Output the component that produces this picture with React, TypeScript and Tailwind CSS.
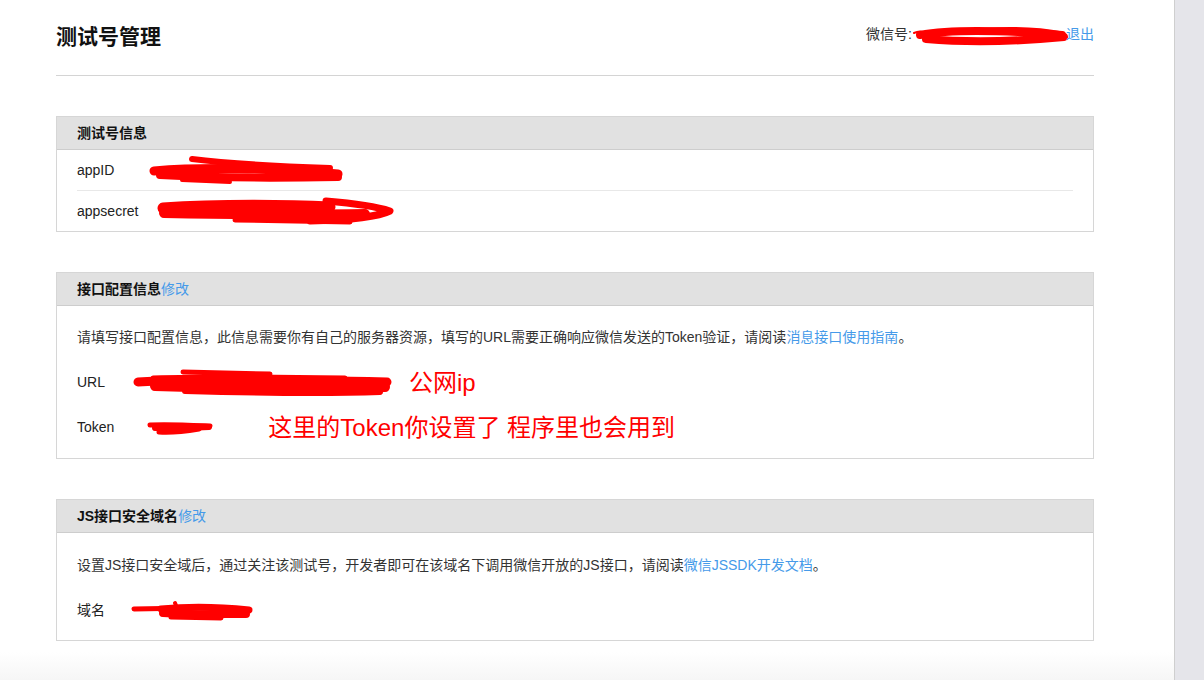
import React from "react";

const FONT = { fontFamily: '"Liberation Sans", "Noto Sans CJK SC", sans-serif' };

function Scribble({ w, h, paths }: { w: number; h: number; paths: [string, number][] }) {
  return (
    <svg width={w} height={h} viewBox={`0 0 ${w} ${h}`} className="block shrink-0 overflow-visible">
      {paths.map(([d, sw], i) => (
        <path key={i} d={d} stroke="#ff0000" strokeWidth={sw} strokeLinecap="round" strokeLinejoin="round" fill="none" />
      ))}
    </svg>
  );
}

function PanelHeader({ title, link }: { title: string; link?: string }) {
  return (
    <div className="h-[33px] bg-[#e1e1e1] border-b border-[#cdcdcd] flex items-center pl-[20px] text-[14px] font-bold text-[#111]">
      {title}
      {link && <span className="text-[#459ae9] font-normal">{link}</span>}
    </div>
  );
}

export default function App() {
  return (
    <div className="flex w-[1204px] h-[680px] overflow-hidden bg-white" style={FONT}>
      <div className="flex-1 h-full bg-[linear-gradient(to_bottom,#ffffff_652px,#f6f6f6_680px)]">
        <div className="ml-[56px] w-[1038px]">
          <div className="h-[76px] border-b border-[#d4d4d4] flex justify-between items-start">
            <h1 className="mt-[22px] text-[21px] leading-[30px] font-bold text-[#111]">测试号管理</h1>
            <div className="mt-[23px] flex items-center text-[14px] leading-[20px] text-[#333]">
              <span>微信号:</span>
              <Scribble
                w={154}
                h={22}
                paths={[
                  ["M8 12 C 40 6, 100 8, 150 12", 8],
                  ["M14 16 C 60 20, 110 18, 152 14", 8],
                  ["M50 9 C 90 5, 120 5, 150 11", 5],
                  ["M2 10 C 6 8, 10 8, 14 10", 2],
                ]}
              />
              <span className="text-[#459ae9]">退出</span>
            </div>
          </div>

          <div className="mt-[40px] border border-[#d6d6d6] text-[14px] text-[#222]">
            <PanelHeader title="测试号信息" />
            <div className="px-[20px]">
              <div className="h-[41px] flex items-center border-b border-[#e8e8e8]">
                <span>appID</span>
                <div className="ml-[38px]">
                  <Scribble
                    w={190}
                    h={28}
                    paths={[
                      ["M2 15 C 50 11, 120 12, 186 18", 9],
                      ["M40 3 C 80 8, 120 10, 178 12", 6],
                      ["M8 19 C 60 22, 130 22, 186 21", 8],
                      ["M30 24 L 78 26", 4],
                      ["M140 13 L 184 16", 4],
                    ]}
                  />
                </div>
              </div>
              <div className="h-[40px] flex items-center">
                <span>appsecret</span>
                <div className="ml-[22px]">
                  <Scribble
                    w={232}
                    h={26}
                    paths={[
                      ["M3 10 C 60 6, 130 7, 170 9", 11],
                      ["M4 15 C 60 16, 140 17, 205 16", 10],
                      ["M166 3 C 190 5, 215 8, 230 13 C 220 18, 190 22, 150 23", 7],
                      ["M75 22 L 190 24", 5],
                    ]}
                  />
                </div>
              </div>
            </div>
          </div>

          <div className="mt-[40px] border border-[#d6d6d6] text-[14px] text-[#222]">
            <PanelHeader title="接口配置信息" link="修改" />
            <div className="px-[20px] pt-[20px] pb-[8px]">
              <p className="leading-[22px] text-[#333]">
                请填写接口配置信息，此信息需要你有自己的服务器资源，填写的URL需要正确响应微信发送的Token验证，请阅读
                <span className="text-[#459ae9]">消息接口使用指南</span>。
              </p>
              <div className="mt-[12px] h-[45px] flex items-center">
                <span>URL</span>
                <div className="ml-[30px]">
                  <Scribble
                    w={256}
                    h={28}
                    paths={[
                      ["M48 3 L 135 5", 5],
                      ["M3 13 C 60 10, 160 11, 252 13", 9],
                      ["M20 17 C 90 19, 180 20, 250 18", 10],
                      ["M50 22 C 120 24, 190 25, 245 23", 6],
                      ["M18 9 C 80 7, 150 8, 210 9", 5],
                    ]}
                  />
                </div>
                <span className="ml-[18px] text-[24px] leading-[30px] text-[#ff0000]">公网ip</span>
              </div>
              <div className="h-[45px] flex items-center">
                <span>Token</span>
                <div className="ml-[33px]">
                  <Scribble
                    w={66}
                    h={18}
                    paths={[
                      ["M3 6 C 20 5, 40 6, 63 7", 5],
                      ["M8 9 C 25 10, 45 9, 62 8", 6],
                      ["M12 13 C 25 14, 40 12, 52 10", 5],
                    ]}
                  />
                </div>
                <span className="ml-[55px] text-[24px] leading-[30px] text-[#ff0000]">这里的Token你设置了 程序里也会用到</span>
              </div>
            </div>
          </div>

          <div className="mt-[40px] border border-[#d6d6d6] text-[14px] text-[#222]">
            <PanelHeader title="JS接口安全域名" link="修改" />
            <div className="px-[20px] pt-[21px] pb-[7px]">
              <p className="leading-[22px] text-[#333]">
                设置JS接口安全域后，通过关注该测试号，开发者即可在该域名下调用微信开放的JS接口，请阅读
                <span className="text-[#459ae9]">微信JSSDK开发文档</span>。
              </p>
              <div className="mt-[12px] h-[45px] flex items-center">
                <span>域名</span>
                <div className="ml-[26px]">
                  <Scribble
                    w={120}
                    h={22}
                    paths={[
                      ["M3 9 L 60 8", 5],
                      ["M30 9 C 60 6, 90 7, 118 10", 7],
                      ["M32 13 C 60 15, 90 14, 115 14", 8],
                      ["M40 17 L 90 18", 5],
                      ["M44 3 L 46 8", 4],
                    ]}
                  />
                </div>
              </div>
            </div>
          </div>
        </div>
      </div>
      <div className="w-[30px] h-full bg-[#e5e5ea] border-l border-[#cfcfcf]" />
    </div>
  );
}
